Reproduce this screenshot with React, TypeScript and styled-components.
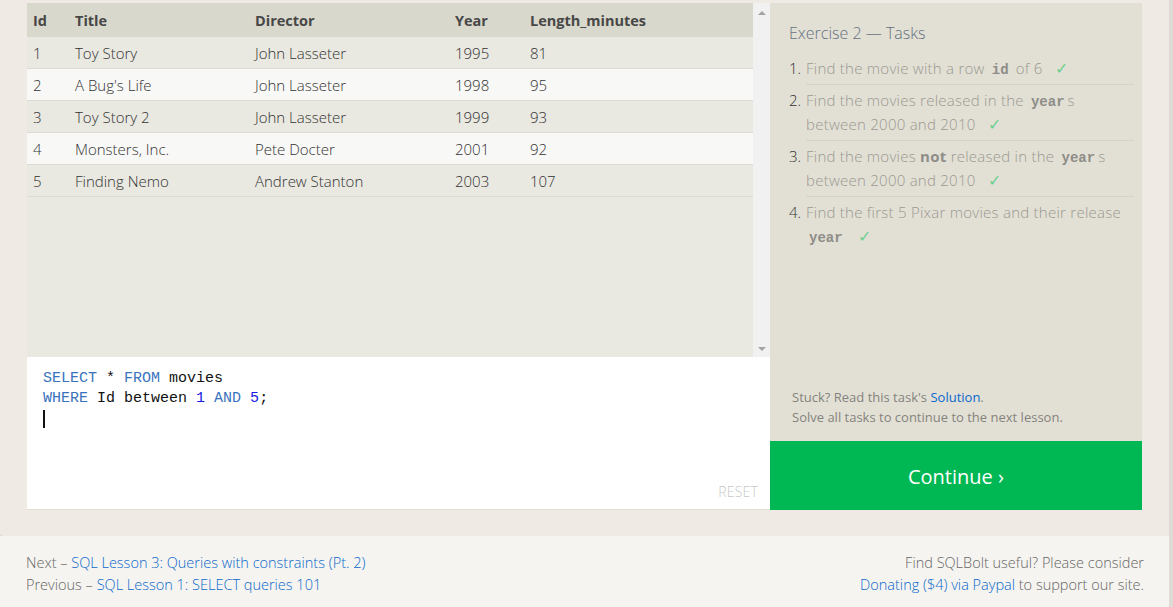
import styled, { createGlobalStyle } from 'styled-components';

const GlobalStyle = createGlobalStyle`
  html, body {
    margin: 0;
    padding: 0;
    background: #dedad5;
  }
  body {
    font-family: 'Open Sans', 'Noto Sans', sans-serif;
    color: #444;
  }
`;

const Page = styled.div`
  width: calc(100% - 4px);
  display: flex;
  flex-direction: column;
`;

const Section = styled.section`
  background: #efebe4;
  padding: 3px 27px 26px 27px;
  border-bottom-left-radius: 4px;
`;

const Workspace = styled.div`
  display: flex;
`;

const LeftColumn = styled.div`
  width: 743px;
  display: flex;
  flex-direction: column;
`;

const ResultsPane = styled.div`
  height: 354px;
  display: flex;
  background: #e9e8e1;
`;

const TableWrap = styled.div`
  flex: 1;
`;

const Table = styled.table`
  width: 100%;
  border-collapse: collapse;
  font-size: 15px;
`;

const HeadCell = styled.th<{ $w?: number }>`
  text-align: left;
  font-weight: 700;
  font-size: 14.5px;
  color: #474747;
  background: #d9d8cc;
  height: 34px;
  padding: 0 6px;
  width: ${(p) => (p.$w ? `${p.$w}px` : 'auto')};
  box-sizing: border-box;
`;

const Row = styled.tr<{ $even: boolean }>`
  background: ${(p) => (p.$even ? '#f8f8f7' : '#e9e8e1')};
  border-bottom: 1px solid #dcdbd4;
`;

const Cell = styled.td`
  height: 31px;
  padding: 0 6px;
  font-weight: 300;
  color: #333;
`;

const ScrollTrack = styled.div`
  width: 17px;
  background: #f1f1f1;
  display: flex;
  flex-direction: column;
  justify-content: space-between;
  align-items: center;
  padding: 8px 0 6px;
  box-sizing: border-box;
`;

const Arrow = styled.div<{ $down?: boolean }>`
  width: 0;
  height: 0;
  border-left: 4px solid transparent;
  border-right: 4px solid transparent;
  ${(p) =>
    p.$down
      ? 'border-top: 4px solid #a3a3a3;'
      : 'border-bottom: 4px solid #a3a3a3;'}
`;

const Editor = styled.div`
  height: 153px;
  background: #fff;
  border-bottom: 1px solid #e2ded5;
  box-sizing: border-box;
  display: flex;
  flex-direction: column;
  padding: 12px 12px 8px 16px;
`;

const Code = styled.pre`
  flex: 1;
  margin: 0;
  font-family: 'Liberation Mono', 'Courier New', monospace;
  font-size: 15px;
  line-height: 20px;
  color: #111;
`;

const Kw = styled.span`
  color: #3a73bd;
`;

const Num = styled.span`
  color: #1818e0;
`;

const Caret = styled.span`
  display: inline-block;
  width: 2px;
  height: 18px;
  background: #111;
  vertical-align: top;
  margin-top: 1px;
`;

const Reset = styled.div`
  align-self: flex-end;
  font-size: 14px;
  font-weight: 300;
  color: #c8c8c8;
  letter-spacing: 0.2px;
`;

const RightColumn = styled.div`
  width: 372px;
  display: flex;
  flex-direction: column;
`;

const TaskPanel = styled.div`
  flex: 1;
  background: #e2e0d5;
  padding: 20px 8px 14px 19px;
  display: flex;
  flex-direction: column;
`;

const PanelTitle = styled.h3`
  margin: 0 0 10px;
  font-size: 16px;
  font-weight: 300;
  color: #66707f;
  line-height: 20px;
`;

const TaskList = styled.ol`
  list-style: none;
  margin: 0;
  padding: 0;
  flex: 1;
`;

const TaskItem = styled.li`
  display: flex;
  font-size: 15px;
  letter-spacing: 0.25px;
  line-height: 24px;
  font-weight: 300;
`;

const TaskNumber = styled.span`
  width: 17px;
  flex: none;
  color: #333;
  letter-spacing: 0;
  padding-top: 3px;
`;

const TaskText = styled.div<{ $last?: boolean }>`
  flex: 1;
  color: #9a9890;
  padding: 3px 0 4px;
  border-bottom: ${(p) => (p.$last ? 'none' : '1px solid #d5d3c8')};
`;

const Mono = styled.code`
  font-family: 'Liberation Mono', 'Courier New', monospace;
  font-weight: 700;
  font-size: 14px;
  line-height: 1;
  letter-spacing: 0;
  color: #8e8d88;
  padding: 0 3px;
`;

const Strong = styled.strong`
  font-weight: 700;
  color: #8e8d88;
`;

const Check = styled.span`
  font-family: 'DejaVu Sans', sans-serif;
  color: #6dcf8f;
  font-size: 16px;
  line-height: 1;
  margin-left: 8px;
`;

const Help = styled.div`
  padding-left: 3px;
  font-size: 13px;
  line-height: 20px;
  color: #85837d;
`;

const BlueLink = styled.a`
  color: #0a68cc;
  text-decoration: none;
`;

const ContinueButton = styled.button`
  height: 69px;
  border: 0;
  background: #00b853;
  color: #fff;
  font-family: 'Open Sans', 'Noto Sans', sans-serif;
  font-size: 20px;
  font-weight: 400;
  padding-top: 2px;
  cursor: pointer;
`;

const Footer = styled.footer`
  background: #f5f4f0;
  padding: 16px 25px 11px 26px;
  display: flex;
  justify-content: space-between;
  font-size: 14.5px;
  line-height: 22px;
  font-weight: 300;
  color: #666;
`;

const FooterBlock = styled.div<{ $right?: boolean }>`
  text-align: ${(p) => (p.$right ? 'right' : 'left')};
`;

const movies = [
  [1, 'Toy Story', 'John Lasseter', 1995, 81],
  [2, "A Bug's Life", 'John Lasseter', 1998, 95],
  [3, 'Toy Story 2', 'John Lasseter', 1999, 93],
  [4, 'Monsters, Inc.', 'Pete Docter', 2001, 92],
  [5, 'Finding Nemo', 'Andrew Stanton', 2003, 107],
];

export default function App() {
  return (
    <Page>
      <GlobalStyle />
      <Section>
        <Workspace>
          <LeftColumn>
            <ResultsPane>
              <TableWrap>
                <Table>
                  <thead>
                    <tr>
                      <HeadCell $w={42}>Id</HeadCell>
                      <HeadCell $w={180}>Title</HeadCell>
                      <HeadCell $w={200}>Director</HeadCell>
                      <HeadCell $w={75}>Year</HeadCell>
                      <HeadCell>Length_minutes</HeadCell>
                    </tr>
                  </thead>
                  <tbody>
                    {movies.map((m, i) => (
                      <Row key={m[0]} $even={i % 2 === 1}>
                        {m.map((v, j) => (
                          <Cell key={j}>{v}</Cell>
                        ))}
                      </Row>
                    ))}
                  </tbody>
                </Table>
              </TableWrap>
              <ScrollTrack>
                <Arrow />
                <Arrow $down />
              </ScrollTrack>
            </ResultsPane>
            <Editor>
              <Code>
                <Kw>SELECT</Kw> * <Kw>FROM</Kw> movies{'\n'}
                <Kw>WHERE</Kw> Id between <Num>1</Num> <Kw>AND</Kw> <Num>5</Num>;{'\n'}
                <Caret />
              </Code>
              <Reset>RESET</Reset>
            </Editor>
          </LeftColumn>
          <RightColumn>
            <TaskPanel>
              <PanelTitle>Exercise 2 — Tasks</PanelTitle>
              <TaskList>
                <TaskItem>
                  <TaskNumber>1.</TaskNumber>
                  <TaskText>
                    Find the movie with a row <Mono>id</Mono> of 6 <Check>✓</Check>
                  </TaskText>
                </TaskItem>
                <TaskItem>
                  <TaskNumber>2.</TaskNumber>
                  <TaskText>
                    Find the movies released in the <Mono>year</Mono>s between 2000 and 2010{' '}
                    <Check>✓</Check>
                  </TaskText>
                </TaskItem>
                <TaskItem>
                  <TaskNumber>3.</TaskNumber>
                  <TaskText>
                    Find the movies <Strong>not</Strong> released in the <Mono>year</Mono>s between
                    2000 and 2010 <Check>✓</Check>
                  </TaskText>
                </TaskItem>
                <TaskItem>
                  <TaskNumber>4.</TaskNumber>
                  <TaskText $last>
                    Find the first 5 Pixar movies and their release <Mono>year</Mono>{' '}
                    <Check>✓</Check>
                  </TaskText>
                </TaskItem>
              </TaskList>
              <Help>
                Stuck? Read this task's <BlueLink href="#">Solution</BlueLink>.
                <br />
                Solve all tasks to continue to the next lesson.
              </Help>
            </TaskPanel>
            <ContinueButton>Continue ›</ContinueButton>
          </RightColumn>
        </Workspace>
      </Section>
      <Footer>
        <FooterBlock>
          Next – <BlueLink href="#">SQL Lesson 3: Queries with constraints (Pt. 2)</BlueLink>
          <br />
          Previous – <BlueLink href="#">SQL Lesson 1: SELECT queries 101</BlueLink>
        </FooterBlock>
        <FooterBlock $right>
          Find SQLBolt useful? Please consider
          <br />
          <BlueLink href="#">Donating ($4) via Paypal</BlueLink> to support our site.
        </FooterBlock>
      </Footer>
    </Page>
  );
}
